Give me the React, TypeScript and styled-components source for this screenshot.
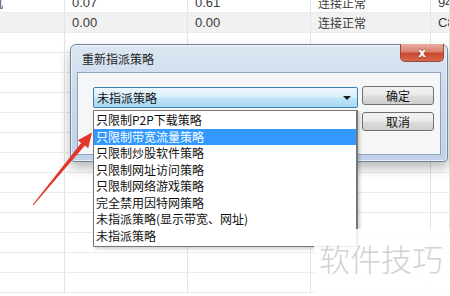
import React from "react";
import styled, { createGlobalStyle } from "styled-components";

const Global = createGlobalStyle`
  html, body {
    margin: 0;
    padding: 0;
    background: #fff;
    overflow: hidden;
  }
  body {
    font-family: "Liberation Sans", "Noto Sans CJK SC", sans-serif;
  }
`;

const Screen = styled.div`
  position: relative;
  width: 450px;
  height: 296px;
  overflow: hidden;
  background: #fff;
`;

const Sheet = styled.div`
  margin-top: -7px;
  display: flex;
  flex-direction: column;
`;

const Row = styled.div<{ $shade?: boolean }>`
  display: grid;
  grid-template-columns: 65px 123px 123px 120px 1fr;
  height: 20px;
  background: ${(p) => (p.$shade ? "#f1f1f1" : "#fff")};
  border-bottom: 1px solid #ebebeb;
  box-sizing: border-box;
`;

const Cell = styled.div<{ $cjk?: boolean }>`
  display: flex;
  align-items: center;
  padding-left: 7px;
  overflow: hidden;
  white-space: nowrap;
  border-right: 1px solid #e4e4e4;
  font-size: ${(p) => (p.$cjk ? "12px" : "13px")};
  color: #3a3a3a;
  font-family: ${(p) =>
    p.$cjk ? `"Noto Sans CJK SC", sans-serif` : `"Liberation Sans", sans-serif`};
`;

const Clipped = styled.span`
  margin-left: -16px;
`;

const Window = styled.div`
  position: absolute;
  left: 70px;
  top: 44px;
  width: 378px;
  height: 118px;
  box-sizing: border-box;
  border: 1px solid #6f859e;
  border-radius: 6px 6px 4px 4px;
  background: linear-gradient(180deg, #dde7f3 0%, #cbd9eb 40%, #c1d2e8 100%);
  box-shadow: 0 6px 12px rgba(0, 0, 0, 0.28), inset 0 0 0 1px rgba(255, 255, 255, 0.6);
  display: flex;
  flex-direction: column;
  font-family: "Noto Sans CJK SC", sans-serif;
`;

const TitleBar = styled.div`
  height: 27px;
  display: flex;
  align-items: flex-start;
  padding-left: 11px;
`;

const Title = styled.span`
  padding-top: 5px;
  font-size: 12px;
  color: #1e1e1e;
`;

const CloseBtn = styled.div`
  margin-left: auto;
  margin-right: 3px;
  margin-top: -1px;
  width: 44px;
  height: 18px;
  box-sizing: border-box;
  border: 1px solid #9a4a3c;
  border-top: none;
  border-radius: 0 0 5px 5px;
  background: linear-gradient(180deg, #e9ada0 0%, #dc8270 45%, #c9492f 55%, #d7684b 100%);
  display: flex;
  align-items: center;
  justify-content: center;
  color: #fff;
  font-family: "DejaVu Sans", sans-serif;
  font-weight: bold;
  font-size: 12px;
  text-shadow: 0 0 2px #7a1d10;
`;

const Client = styled.div`
  flex: 1;
  margin: 0 6px 6px 6px;
  border: 1px solid #8da3bd;
  background: #f5f6f8;
  display: flex;
  align-items: flex-start;
  gap: 4px;
  padding: 14px 0 0 15px;
`;

const ComboWrap = styled.div`
  position: relative;
  width: 265px;
`;

const Combo = styled.div`
  height: 21px;
  box-sizing: border-box;
  border: 1px solid #3c7fb1;
  border-radius: 2px;
  background: linear-gradient(180deg, #eef7fd 0%, #dcf0fb 45%, #bfe3f8 55%, #a9d9f5 100%);
  display: flex;
  align-items: center;
  padding: 0 6px 0 3px;
  font-size: 12px;
  color: #111;
`;

const Caret = styled.span`
  margin-left: auto;
  width: 0;
  height: 0;
  border-left: 4px solid transparent;
  border-right: 4px solid transparent;
  border-top: 4px solid #1b1b1b;
`;

const List = styled.div`
  position: absolute;
  left: 0;
  top: 23px;
  width: 265px;
  box-sizing: border-box;
  border: 1px solid #767676;
  border-right-width: 2px;
  background: #fff;
  padding: 1px 0 2px;
  box-shadow: 2px 2px 3px rgba(0, 0, 0, 0.18);
  z-index: 2;
`;

const Item = styled.div<{ $active?: boolean }>`
  height: 16.5px;
  line-height: 16.5px;
  padding-left: 2px;
  font-size: 12px;
  color: ${(p) => (p.$active ? "#fff" : "#111")};
  background: ${(p) => (p.$active ? "#3399ff" : "transparent")};
  white-space: nowrap;
`;

const Buttons = styled.div`
  display: flex;
  flex-direction: column;
  gap: 7px;
  margin-top: -1px;
`;

const Button = styled.div`
  width: 72px;
  height: 19px;
  box-sizing: border-box;
  border: 1px solid #707070;
  border-radius: 3px;
  background: linear-gradient(180deg, #f2f2f2 0%, #ebebeb 45%, #dddddd 55%, #cfcfcf 100%);
  display: flex;
  align-items: center;
  justify-content: center;
  font-size: 12px;
  color: #111;
`;

const Arrow = styled.svg`
  position: absolute;
  left: 0;
  top: 0;
  width: 450px;
  height: 296px;
  pointer-events: none;
  z-index: 3;
`;

const Watermark = styled.div`
  position: absolute;
  left: 314px;
  top: 229px;
  right: 0;
  bottom: 0;
  background: rgba(255, 255, 255, 0.88);
  padding: 13px 0 0 5px;
  font-family: "Noto Sans CJK SC", sans-serif;
  font-weight: 300;
  font-size: 31px;
  line-height: 1;
  color: #d2d2d2;
  white-space: nowrap;
  z-index: 4;
`;

const rows = [
  ["机", "0.07", "0.61", "连接正常", "94"],
  ["", "0.00", "0.00", "连接正常", "C8"],
];

const options = [
  "只限制P2P下载策略",
  "只限制带宽流量策略",
  "只限制炒股软件策略",
  "只限制网址访问策略",
  "只限制网络游戏策略",
  "完全禁用因特网策略",
  "未指派策略(显示带宽、网址)",
  "未指派策略",
];

export default function App() {
  return (
    <Screen>
      <Global />
      <Sheet>
        {rows.map((r, i) => (
          <Row key={i} $shade={i === 1}>
            <Cell $cjk>{r[0] && <Clipped>{r[0]}</Clipped>}</Cell>
            <Cell>{r[1]}</Cell>
            <Cell>{r[2]}</Cell>
            <Cell $cjk>{r[3]}</Cell>
            <Cell>{r[4]}</Cell>
          </Row>
        ))}
        {Array.from({ length: 13 }).map((_, i) => (
          <Row key={"e" + i}>
            <Cell />
            <Cell />
            <Cell />
            <Cell />
            <Cell />
          </Row>
        ))}
      </Sheet>

      <Window>
        <TitleBar>
          <Title>重新指派策略</Title>
          <CloseBtn>x</CloseBtn>
        </TitleBar>
        <Client>
          <ComboWrap>
            <Combo>
              未指派策略
              <Caret />
            </Combo>
            <List>
              {options.map((o, i) => (
                <Item key={o} $active={i === 1}>
                  {o}
                </Item>
              ))}
            </List>
          </ComboWrap>
          <Buttons>
            <Button>确定</Button>
            <Button>取消</Button>
          </Buttons>
        </Client>
      </Window>

      <Arrow viewBox="0 0 450 296">
        <polygon
          points="32.6,204.7 81.1,142.9 77.8,140.3 92,132.5 88.2,148.2 84.9,145.6 33.4,205.3"
          fill="#e2362c"
        />
      </Arrow>

      <Watermark>软件技巧</Watermark>
    </Screen>
  );
}
